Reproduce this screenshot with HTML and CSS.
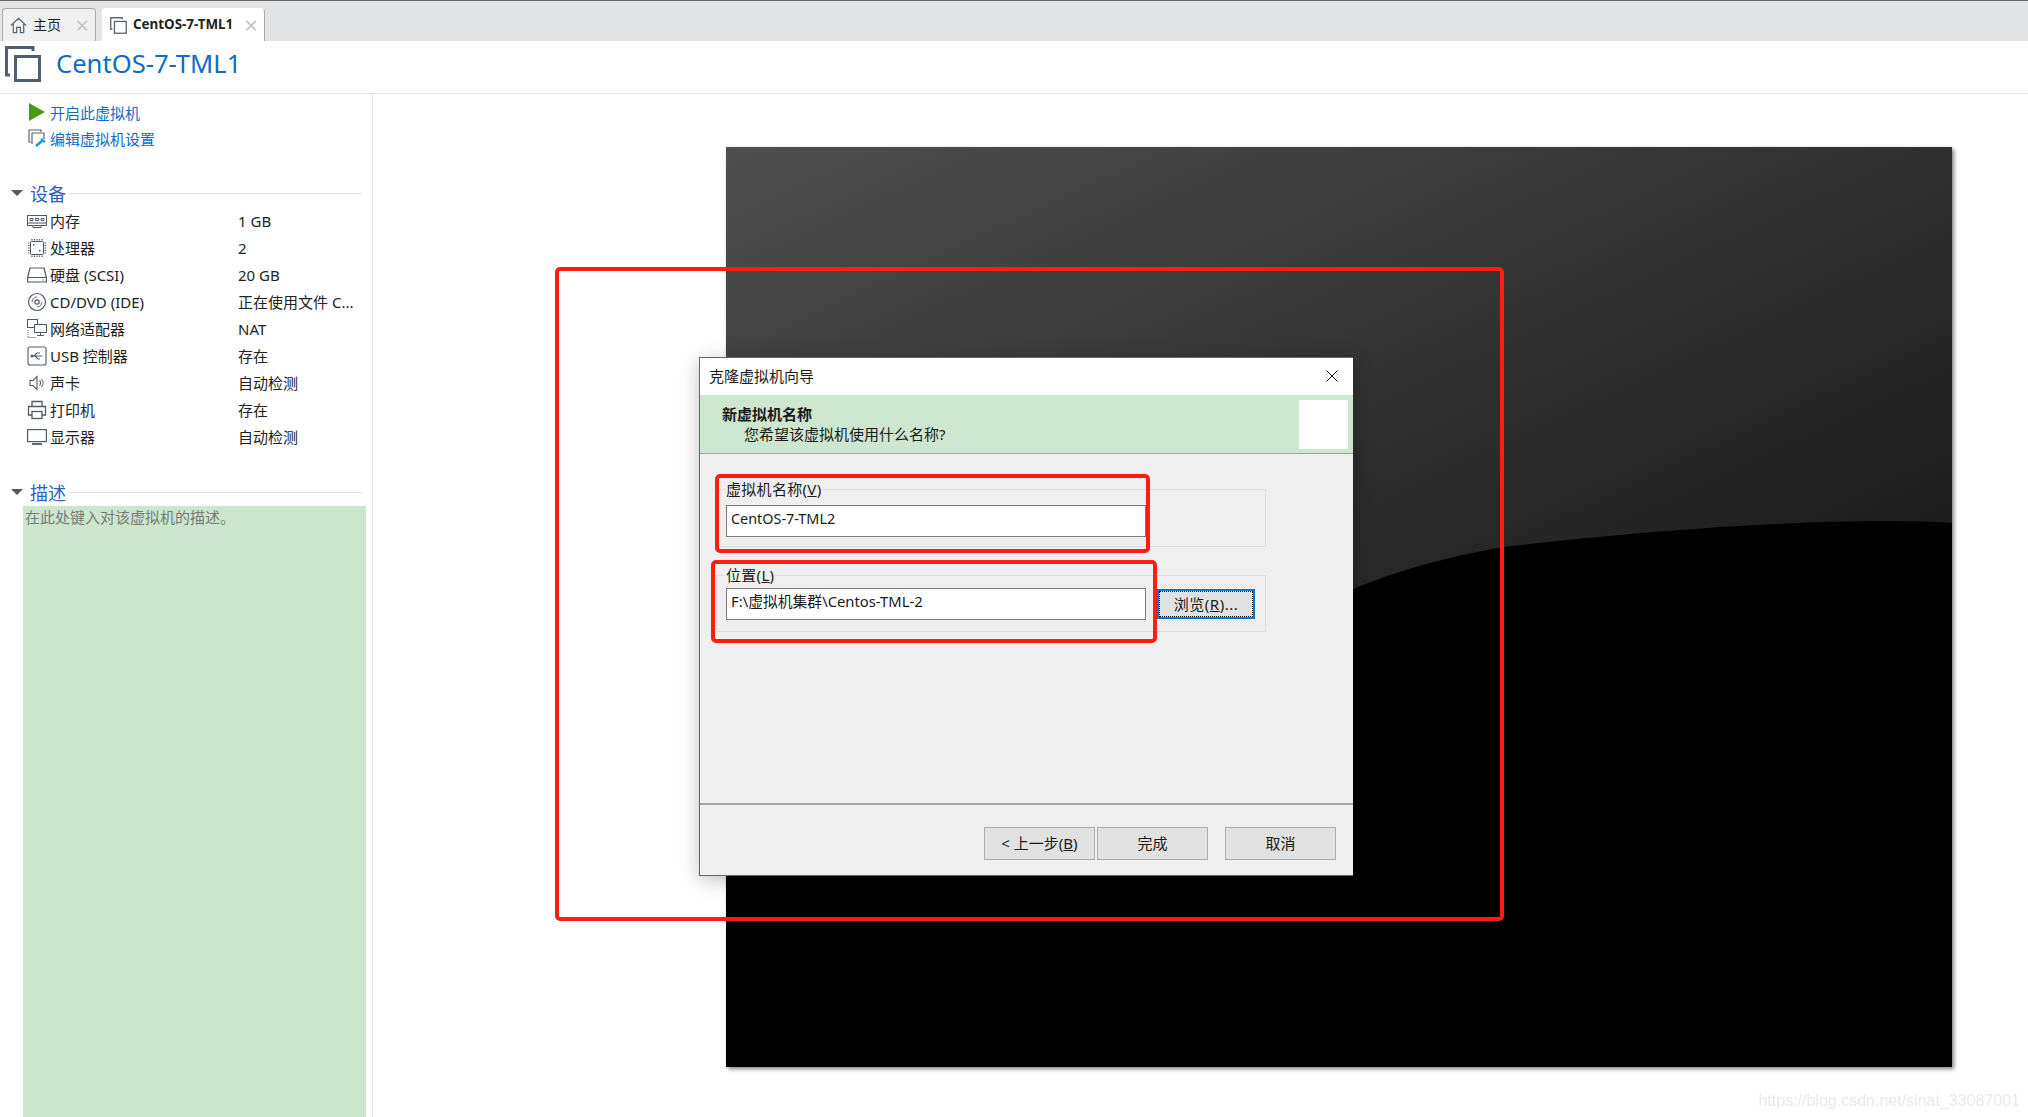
FILE: index.html
```html
<!DOCTYPE html>
<html lang="zh-CN">
  <head>
    <meta charset="UTF-8" />
    <title>CentOS-7-TML1</title>
    <link rel="stylesheet" href="styles.css">
  </head>
  <body>
    <nav class="tabbar">
      <div class="tab">
        <svg class="tab-icon" viewBox="0 0 18 18" fill="none" stroke="#5b6670" stroke-width="1.3"><path d="M1 9 9 1.5 17 9M3.5 7.5V16.5H7V11H11V16.5H14.5V7.5"/></svg>
        <span class="tab-name">主页</span>
        <span class="tab-close">×</span>
      </div>
      <div class="tab tab-active">
        <svg class="tab-icon" viewBox="0 0 18 18" fill="none" stroke="#5b6670" stroke-width="1.4"><path d="M13 2.500V.8H.8V13H2.500"/><rect x="4.700" y="4.700" width="12.500" height="12.500"/></svg>
        <span class="tab-name">CentOS-7-TML1</span>
        <span class="tab-close">×</span>
      </div>
    </nav>

    <header class="page-head">
      <svg class="head-icon" viewBox="0 0 36 36" fill="none" stroke="#4f6071" stroke-width="3"><path d="M28 5V1.500H1.500V29H5"/><rect x="10.500" y="10.500" width="24" height="24"/></svg>
      <h1>CentOS-7-TML1</h1>
    </header>

    <main class="content">
      <aside class="sidebar">
        <a class="action">
          <svg class="action-icon" viewBox="0 0 18 18"><path d="M1 0 17 9 1 18Z" fill="#4c9a0e"/></svg>
          开启此虚拟机
        </a>
        <a class="action">
          <svg class="action-icon" viewBox="0 0 18 18" fill="none"><path d="M13 3V1H1V13H3" stroke="#5b6670" stroke-width="1.200"/><path d="M4 15V4H16V10" stroke="#5b6670" stroke-width="1.200"/><path d="M8 17 14 12" stroke="#1c9ad6" stroke-width="2.600"/><path d="M13 10 17 13" stroke="#1c9ad6" stroke-width="2.200"/></svg>
          编辑虚拟机设置
        </a>

        <div class="section-head">
          <span class="arrow"></span><h2>设备</h2><span class="rule"></span>
        </div>
        <div class="device">
          <svg viewBox="0 0 20 14" fill="none" stroke="#4f5a64"><rect x=".5" y="1.500" width="19" height="10"/><path d="M3 4.500h3v2H3zM8.500 4.500h3v2h-3zM14 4.500h3v2h-3zM.5 9h19M6 11.500v2h8v-2"/></svg>
          <span>内存</span><span>1 GB</span>
        </div>
        <div class="device">
          <svg viewBox="0 0 20 20" fill="none" stroke="#4f5a64"><rect x="3.500" y="3.500" width="13" height="13" rx="1"/><path d="M5 1v1.500M7.500 1v1.500M10 1v1.500M12.500 1v1.500M15 1v1.500M5 17.500V19M7.500 17.500V19M10 17.500V19M12.500 17.500V19M15 17.500V19M1 5h1.500M1 7.500h1.500M1 10h1.500M1 12.500h1.500M1 15h1.500M17.500 5H19M17.500 7.500H19M17.500 10H19M17.500 12.500H19M17.500 15H19" stroke-width="1.200"/><path d="M6 6h1.500v1.500H6zM12 12h1.500v1.500H12z" fill="#4f5a64" stroke="none"/></svg>
          <span>处理器</span><span>2</span>
        </div>
        <div class="device">
          <svg viewBox="0 0 20 16" fill="none" stroke="#4f5a64" stroke-width="1.200"><path d="M.6 10.500 3 1h14l2.400 9.500M.6 10.500h18.800v4.500H.6z"/><path d="M15.500 13h1.500"/></svg>
          <span>硬盘 (SCSI)</span><span>20 GB</span>
        </div>
        <div class="device">
          <svg viewBox="0 0 20 20" fill="none" stroke="#4f5a64" stroke-width="1.200"><circle cx="10" cy="10" r="8.500"/><circle cx="10" cy="10" r="2.200"/><path d="M5 10a5 5 0 0 1 5-5M15 10a5 5 0 0 1-5 5" stroke-width=".9"/></svg>
          <span>CD/DVD (IDE)</span><span>正在使用文件 C...</span>
        </div>
        <div class="device">
          <svg viewBox="0 0 20 20" fill="none" stroke="#4f5a64"><rect x=".5" y=".5" width="10" height="8"/><rect x="7.500" y="5.500" width="12" height="8" fill="#fff"/><path d="M13.500 13.500V16M10 16.500h7"/><path d="M1 11v7.500h8" stroke-dasharray="1 1"/></svg>
          <span>网络适配器</span><span>NAT</span>
        </div>
        <div class="device">
          <svg viewBox="0 0 20 20" fill="none" stroke="#4f5a64" stroke-width="1.100"><rect x="1" y="1" width="18" height="18" rx="2"/><path d="M4.500 10h11M7 10l3-3h3M8 10l3 3h2"/><circle cx="5" cy="10" r="1" fill="#4f5a64"/></svg>
          <span>USB 控制器</span><span>存在</span>
        </div>
        <div class="device">
          <svg viewBox="0 0 20 16" fill="none" stroke="#4f5a64" stroke-width="1.100"><path d="M3 5.500H6L10 1.500V14.500L6 10.500H3z"/><path d="M12.500 5.500a3.500 3.500 0 0 1 0 5M14.500 4a6 6 0 0 1 0 8"/></svg>
          <span>声卡</span><span>自动检测</span>
        </div>
        <div class="device">
          <svg viewBox="0 0 20 20" fill="none" stroke="#4f5a64" stroke-width="1.300"><path d="M5 6V1.500H15V6M5 15H1.500V6.500H18.500V15H15"/><rect x="5" y="11.500" width="10" height="7"/></svg>
          <span>打印机</span><span>存在</span>
        </div>
        <div class="device">
          <svg viewBox="0 0 20 16" fill="none" stroke="#4f5a64" stroke-width="1.200"><rect x=".6" y=".6" width="18.800" height="12"/><path d="M5 15h10" stroke-width="1.800"/></svg>
          <span>显示器</span><span>自动检测</span>
        </div>

        <div class="section-head">
          <span class="arrow"></span><h2>描述</h2><span class="rule"></span>
        </div>
        <div class="desc-box">在此处键入对该虚拟机的描述。</div>
      </aside>

      <section class="stage">
        <div class="vm-screen">
          <svg class="vm-arc" viewBox="0 0 1226 920"><path d="M1226 376C1150 371 1000 375 777 400 720 410 670 424 627 442L0 700V920H1226Z" fill="#000"/></svg>
        </div>

        <div class="mark mark-outer"></div>

        <div class="dialog">
          <div class="dialog-title">
            <span>克隆虚拟机向导</span>
            <svg class="dialog-close" viewBox="0 0 12 12" fill="none" stroke="#111"><path d="M.5.5 11.500 11.500M11.500.5.500 11.500"/></svg>
          </div>
          <div class="dialog-head">
            <div class="dialog-head-text">
              <strong>新虚拟机名称</strong>
              <p>您希望该虚拟机使用什么名称?</p>
            </div>
            <div class="dialog-logo"></div>
          </div>
          <div class="dialog-body">
            <fieldset class="group group-name">
              <legend>虚拟机名称(<u>V</u>)</legend>
              <div class="textbox">CentOS-7-TML2</div>
            </fieldset>
            <fieldset class="group group-path">
              <legend>位置(<u>L</u>)</legend>
              <div class="path-row">
                <div class="textbox">F:\虚拟机集群\Centos-TML-2</div>
                <button class="btn btn-focus"><span>浏览(<u>R</u>)...</span></button>
              </div>
            </fieldset>
          </div>
          <div class="dialog-foot">
            <button class="btn">&lt; 上一步(<u>B</u>)</button>
            <button class="btn">完成</button>
            <button class="btn btn-cancel">取消</button>
          </div>
          <div class="mark mark-name"></div>
          <div class="mark mark-path"></div>
        </div>

        <div class="watermark">https://blog.csdn.net/sinat_33087001</div>
      </section>
    </main>
  </body>
</html>
```

FILE: styles.css
```css
* {
  box-sizing: border-box;
}

html,
body {
  height: 100%;
}

body {
  margin: 0;
  display: flex;
  flex-direction: column;
  overflow: hidden;
  background: #fff;
  color: #222;
  font-family: "Noto Sans", "Noto Sans CJK SC", sans-serif;
  font-size: 15px;
}

/* tabs */
.tabbar {
  display: flex;
  gap: 6px;
  height: 41px;
  padding: 7px 0 0 2px;
  background: #e3e4e6;
  border-top: 1px solid #666;
}

.tab {
  display: flex;
  align-items: center;
  width: 94px;
  padding-left: 7px;
  background: #f0f0f0;
  border: 1px solid #aaa;
  border-bottom: none;
  border-radius: 4px 4px 0 0;
}

.tab-active {
  width: 163px;
  background: #fff;
  border-color: #fff #aaa #fff #fff;
  font-weight: bold;
}

.tab-icon {
  width: 17px;
  height: 17px;
  margin-right: 6px;
  flex: none;
}

.tab-name {
  font-size: 14px;
  line-height: 1;
}

.tab-active .tab-name {
  font-size: 13.4px;
}

.tab-close {
  margin-left: auto;
  margin-right: 6px;
  color: #c6c6c6;
  font-size: 24px;
  font-weight: normal;
  line-height: 1;
}

/* page title */
.page-head {
  display: flex;
  align-items: center;
  height: 53px;
  padding: 0 0 6px 5px;
  border-bottom: 1px solid #e3e3e3;
}

.head-icon {
  width: 36px;
  height: 36px;
  margin-right: 15px;
}

.page-head h1 {
  margin: -2px 0 0;
  color: #0e6bcb;
  font-size: 25.6px;
  font-weight: normal;
}

.content {
  display: flex;
  flex: 1;
  min-height: 0;
}

/* left column */
.sidebar {
  display: flex;
  flex-direction: column;
  flex: none;
  width: 373px;
  padding: 5px 0 0;
  border-right: 1px solid #e3e3e3;
}

.action {
  display: flex;
  align-items: center;
  height: 26px;
  padding-left: 28px;
  color: #0e6bcb;
}

.action-icon {
  width: 18px;
  height: 18px;
  margin-right: 4px;
}

.section-head {
  display: flex;
  align-items: center;
  height: 28px;
  margin-top: 28px;
  padding: 0 10px 0 11px;
}

.arrow {
  width: 0;
  height: 0;
  margin-right: 7px;
  border-style: solid;
  border-width: 6px 6px 0;
  border-color: #4f5a64 transparent transparent;
}

.section-head h2 {
  margin: 0;
  color: #2a5fc6;
  font-size: 18px;
  font-weight: normal;
}

.rule {
  flex: 1;
  height: 1px;
  margin-left: 3px;
  background: #dedede;
}

.device {
  display: grid;
  grid-template-columns: 23px 188px 1fr;
  align-items: center;
  height: 27px;
  padding-left: 27px;
  white-space: nowrap;
}

.device svg {
  width: 20px;
  height: 20px;
}

.desc-box {
  flex: 1;
  width: 343px;
  margin-left: 23px;
  padding: 0 2px;
  background: #cce6cd;
  color: #7a7a7a;
  line-height: 22px;
}

/* right part */
.stage {
  position: relative;
  flex: 1;
  padding: 53px 0 0 353px;
}

.vm-screen {
  width: 1226px;
  height: 920px;
  background: linear-gradient(155deg, #4e4e4e, #000);
  box-shadow: 2px 2px 4px rgba(0, 0, 0, 0.5);
}

.vm-arc {
  display: block;
  width: 100%;
  height: 100%;
}

.mark {
  position: absolute;
  border: 4px solid #fc1f11;
  border-radius: 5px;
}

.mark-outer {
  left: 182px;
  top: 173px;
  width: 949px;
  height: 654px;
}

.mark-name {
  left: 15px;
  top: 116px;
  width: 435px;
  height: 79px;
}

.mark-path {
  left: 11px;
  top: 202px;
  width: 446px;
  height: 83px;
}

/* wizard window */
.dialog {
  position: absolute;
  left: 326px;
  top: 263px;
  display: flex;
  flex-direction: column;
  width: 654px;
  height: 519px;
  background: #efefef;
  border: 1px solid #666;
  border-right: none;
  box-shadow: 0 4px 18px rgba(0, 0, 0, 0.25);
  color: #1a1a1a;
}

.dialog-title {
  display: flex;
  align-items: center;
  justify-content: space-between;
  height: 37px;
  padding: 0 15px 2px 9px;
  background: #fff;
}

.dialog-close {
  width: 12px;
  height: 12px;
}

.dialog-head {
  display: flex;
  justify-content: space-between;
  height: 59px;
  padding: 5px 5px 0 22px;
  background: #cde6cf;
  border-bottom: 1px solid #a3a3a3;
}

.dialog-head-text {
  line-height: 19px;
  padding-top: 5px;
}

.dialog-head-text strong {
  display: block;
}

.dialog-head-text p {
  margin: 1px 0 0 22px;
}

.dialog-logo {
  width: 49px;
  height: 49px;
  background: #fff;
}

.dialog-body {
  flex: 1;
  padding-left: 16px;
}

.group {
  width: 550px;
  margin: 0;
  padding: 0 10px 0 9px;
  border: 1px solid #dcdcdc;
}

.group legend {
  padding: 0;
  margin-left: 0;
  letter-spacing: 0.3px;
  line-height: 20px;
}

.group-name {
  height: 68px;
  margin-top: 25px;
}

.group-name .textbox {
  margin-top: 6px;
  font-size: 14.4px;
}

.group-path {
  height: 67px;
  margin-top: 18px;
}

.path-row {
  display: flex;
  gap: 11px;
  margin-top: 3px;
}

.textbox {
  width: 420px;
  height: 32px;
  padding: 0 0 0 4px;
  background: #fff;
  border: 1px solid #7a7a7a;
  font-size: 14.8px;
  line-height: 25px;
  white-space: nowrap;
}

.btn {
  flex: none;
  width: 111px;
  height: 33px;
  padding: 0 0 2px;
  background: #e1e1e1;
  border: 1px solid #adadad;
  color: #1a1a1a;
  font-family: inherit;
  font-size: 15px;
}

.btn-focus {
  width: 98px;
  height: 30px;
  margin-top: 1px;
  padding: 0;
  border: 2px solid #0078d7;
}

.btn-focus span {
  display: block;
  height: 100%;
  border: 1px dotted #111;
  letter-spacing: 0.5px;
  line-height: 24px;
}

.dialog-foot {
  display: flex;
  gap: 2px;
  height: 72px;
  padding: 22px 0 0 284px;
  border-top: 2px solid #a3a3a3;
}

.btn-cancel {
  margin-left: 15px;
}

.watermark {
  position: absolute;
  right: 8px;
  bottom: 7px;
  color: #e9e9e9;
  font-family: "Liberation Sans", sans-serif;
  font-size: 16px;
  filter: blur(0.5px);
}
```
